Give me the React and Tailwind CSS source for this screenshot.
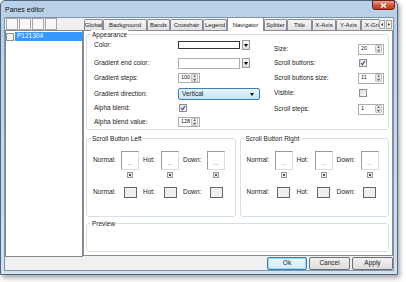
import React from "react";

const tabs = [
  ["Global", "w-[19px]"],
  ["Background", "w-[44px]"],
  ["Bands", "w-[23px]"],
  ["Crosshair", "w-[33px]"],
  ["Legend", "w-[24px]"],
  ["Navigator", "w-[37px]"],
  ["Splitter", "w-[23px]"],
  ["Title", "w-[25px]"],
  ["X-Axis", "w-[24px]"],
  ["Y-Axis", "w-[25px]"],
  ["X-Gri", "w-[18px]"],
];

function Down({ w = 4, h = 3, color = "#000" }) {
  return (
    <svg width={w} height={h} viewBox="0 0 4 3">
      <path d="M0 0H4L2 3Z" fill={color} />
    </svg>
  );
}

function SpinArrows() {
  return (
    <div className="flex flex-col w-[7px] h-[8px] mr-[1px] border border-[#c3c3c3] rounded-[1px] bg-gradient-to-b from-[#f8f8f8] to-[#e2e2e2]">
      <div className="flex-1 flex items-center justify-center border-b border-[#d0d0d0]">
        <svg width="3" height="2" viewBox="0 0 3 2"><path d="M0 2L1.5 0L3 2Z" fill="#666" /></svg>
      </div>
      <div className="flex-1 flex items-center justify-center">
        <svg width="3" height="2" viewBox="0 0 3 2"><path d="M0 0L1.5 2L3 0Z" fill="#666" /></svg>
      </div>
    </div>
  );
}

function Spin({ value, wide }) {
  return (
    <div className={`flex items-center justify-between border border-[#abadb3] bg-white ${wide ? "w-[26px] h-[11px]" : "w-[22px] h-[10px]"}`}>
      <span className="pl-[2px] text-[5.5px] leading-none">{value}</span>
      <SpinArrows />
    </div>
  );
}

function Check({ checked }) {
  return (
    <div className="ml-[1px] w-[8px] h-[8px] border border-[#8e8f8f] bg-gradient-to-br from-[#dcdcdc] to-[#fbfbfb] flex items-center justify-center">
      {checked && (
        <svg width="6" height="6" viewBox="0 0 6 6">
          <path d="M1 3.2L2.4 4.7L5 1.2" stroke="#4a5f97" strokeWidth="1.2" fill="none" />
        </svg>
      )}
    </div>
  );
}

function ColorCombo({ dark }) {
  return (
    <div className="flex items-center gap-[2px]">
      <div className={`w-[62px] bg-white ${dark ? "h-[8px] border border-[#333333]" : "h-[11px] border border-[#abadb3]"}`} />
      <div className="w-[8px] h-[10px] border border-[#9a9a9a] bg-gradient-to-b from-[#f6f6f6] to-[#dedede] flex items-center justify-center">
        <Down />
      </div>
    </div>
  );
}

function Row({ label, className = "", children }) {
  return (
    <div className={`flex items-center h-[12px] ${className}`}>
      <span className="w-[84px] shrink-0">{label}</span>
      {children}
    </div>
  );
}

function Group({ title, className = "", children }) {
  return (
    <div className={`relative border border-[#d5dfe5] rounded-[3px] ${className}`}>
      <span className="absolute left-[4px] -top-[5px] bg-white px-[1px] leading-[9px]">{title}</span>
      {children}
    </div>
  );
}

function PicBox() {
  return (
    <div className="flex flex-col items-center">
      <div className="w-[18px] h-[19px] bg-white border border-[#dddddd] border-t-[#9a9a9a] border-l-[#9a9a9a] flex items-end justify-center pb-[3px] text-[6px] text-[#555] leading-none">
        ...
      </div>
      <div className="mt-[2px] w-[6px] h-[6px] border border-[#9a9a9a] bg-[#e8e8e8] flex items-center justify-center">
        <div className="w-[2px] h-[2px] bg-[#555]" />
      </div>
    </div>
  );
}

function SmallBox() {
  return (
    <div className="w-[18px] flex justify-center">
      <div className="w-[13px] h-[11px] border border-[#666] bg-[#f0f0f0]" />
    </div>
  );
}

function ScrollGroup({ title }) {
  return (
    <Group title={title} className="flex-1 h-[79px]">
      <div className="flex items-start pl-[6px] pt-[12px]">
        <span className="w-[28px] h-[19px] flex items-center">Normal:</span>
        <PicBox />
        <span className="w-[22px] h-[19px] flex items-center pl-[4px]">Hot:</span>
        <PicBox />
        <span className="w-[28px] h-[19px] flex items-center pl-[4px]">Down:</span>
        <PicBox />
      </div>
      <div className="flex items-center pl-[6px] mt-[9px] h-[11px]">
        <span className="w-[28px]">Normal:</span>
        <SmallBox />
        <span className="w-[22px] pl-[4px]">Hot:</span>
        <SmallBox />
        <span className="w-[28px] pl-[4px]">Down:</span>
        <SmallBox />
      </div>
    </Group>
  );
}

function Btn({ children, focus }) {
  return (
    <button
      className={`h-full rounded-[2px] border flex items-center justify-center ${
        focus
          ? "w-[40px] border-[#3c7fb1] bg-gradient-to-b from-[#eaf6fd] to-[#d5ecf9] shadow-[inset_0_0_0_1px_#9fd3f2]"
          : "w-[41px] border-[#707070] bg-gradient-to-b from-[#f2f2f2] to-[#dcdcdc]"
      }`}
    >
      {children}
    </button>
  );
}

export default function App() {
  return (
    <div className="w-[406px] h-[282px] bg-white overflow-hidden text-[6.5px] leading-none text-[#1a1a1a] [font-family:'Liberation_Sans',Arial,sans-serif]">
      <div className="w-[398px] h-[275px] flex flex-col border border-[#51667e] rounded-t-[5px] bg-gradient-to-b from-[#b8d0e9] to-[#d2e1f1] shadow-[2px_3px_5px_rgba(0,0,0,0.35)]">
        {/* title bar */}
        <div className="h-[16px] flex items-start justify-between shrink-0">
          <span className="pl-[4px] pt-[5px] text-[7px] text-[#111]">Panes editor</span>
          <div className="-mt-[1px] mr-[2px] w-[23px] h-[10px] rounded-b-[3px] border border-[#6b2316] bg-gradient-to-b from-[#e6a595] via-[#d1573d] to-[#c2391f] flex items-center justify-center">
            <svg width="7" height="5" viewBox="0 0 7 5">
              <path d="M1 0.5L6 4.5M6 0.5L1 4.5" stroke="#fff" strokeWidth="1.4" />
            </svg>
          </div>
        </div>

        {/* client */}
        <div className="mx-[3px] mb-[3px] flex-1 flex flex-col border border-[#7f94ab] bg-[#f0f0f0]">
          <div className="h-[239px] flex">
            {/* left column */}
            <div className="w-[78px] flex flex-col">
              <div className="h-[12px] flex gap-[1px] pl-[1px]">
                <div className="w-[12px] h-[12px] border border-[#a7a7a7] bg-[#f7f7f7]" />
                <div className="w-[12px] h-[12px] border border-[#a7a7a7] bg-[#f7f7f7]" />
                <div className="w-[12px] h-[12px] border border-[#a7a7a7] bg-[#f7f7f7]" />
                <div className="w-[12px] h-[12px] border border-[#a7a7a7] bg-[#f7f7f7]" />
              </div>
              <div className="flex-1 bg-white border border-[#828790] pt-[1px]">
                <div className="flex items-center h-[9px]">
                  <div className="w-[8px] h-[8px] border border-[#8e8f8f] bg-[#f4f4f4]" />
                  <div className="flex-1 h-full ml-[1px] bg-[#3399ff] text-white flex items-center pl-[2px]">P121304</div>
                </div>
              </div>
            </div>

            {/* right column */}
            <div className="flex-1 flex flex-col">
              <div className="h-[12px] flex items-end pl-[1px] relative z-10 text-[6px]">
                {tabs.map(([name, w]) => {
                  const active = name === "Navigator";
                  return (
                    <div
                      key={name}
                      className={`${w} overflow-hidden whitespace-nowrap flex items-center ${
                        active
                          ? "h-[14px] -mb-[1px] bg-white border border-b-0 border-[#898c95] rounded-t-[2px] justify-center"
                          : name === "X-Gri"
                          ? "h-[11px] border border-r-0 border-b-0 border-[#898c95] bg-gradient-to-b from-[#f5f5f5] to-[#e1e1e1] pl-[3px]"
                          : "h-[11px] border border-b-0 border-[#898c95] rounded-t-[2px] bg-gradient-to-b from-[#f5f5f5] to-[#e1e1e1] justify-center"
                      }`}
                    >
                      {name}
                    </div>
                  );
                })}
                <div className="flex gap-[1px] mb-[1px]">
                  <div className="w-[6px] h-[9px] border border-[#a5a5a5] bg-[#f2f2f2] flex items-center justify-center">
                    <svg width="2" height="3" viewBox="0 0 2 3"><path d="M2 0V3L0 1.5Z" fill="#333" /></svg>
                  </div>
                  <div className="w-[6px] h-[9px] border border-[#a5a5a5] bg-[#f2f2f2] flex items-center justify-center">
                    <svg width="2" height="3" viewBox="0 0 2 3"><path d="M0 0V3L2 1.5Z" fill="#333" /></svg>
                  </div>
                </div>
              </div>

              <div className="h-[226px] bg-white border border-[#898c95] pt-[3px] pl-[2px] pr-[3px] flex flex-col">
                {/* Appearance */}
                <Group title="Appearance" className="h-[96px]">
                  <div className="flex items-start pl-[7px] pt-[4px]">
                    <div className="w-[166px] flex flex-col">
                      <Row label="Color:"><ColorCombo dark /></Row>
                      <Row label="Gradient end color:" className="mt-[6px]"><ColorCombo /></Row>
                      <Row label="Gradient steps:" className="mt-[3px]"><Spin value="100" /></Row>
                      <Row label="Gradient direction:" className="mt-[4px]">
                        <div className="w-[82px] h-[12px] rounded-[2px] border border-[#3c7fb1] bg-gradient-to-b from-[#e8f5fd] to-[#c2e4f7] flex items-center justify-between pl-[3px] pr-[5px]">
                          <span>Vertical</span>
                          <Down />
                        </div>
                      </Row>
                      <Row label="Alpha blend:" className="mt-[2px]"><Check checked /></Row>
                      <Row label="Alpha blend value:" className="mt-[2px]"><Spin value="128" /></Row>
                    </div>
                    <div className="w-[110px] ml-[14px] mt-[4px] flex flex-col">
                      <Row label="Size:"><Spin value="20" wide /></Row>
                      <Row label="Scroll buttons:" className="mt-[2px]"><Check checked /></Row>
                      <Row label="Scroll buttons size:" className="mt-[3px]"><Spin value="11" wide /></Row>
                      <Row label="Visible:" className="mt-[3px]"><Check /></Row>
                      <Row label="Scroll steps:" className="mt-[4px]"><Spin value="1" wide /></Row>
                    </div>
                  </div>
                </Group>

                <div className="mt-[8px] flex gap-[4px]">
                  <ScrollGroup title="Scroll Button Left" />
                  <ScrollGroup title="Scroll Button Right" />
                </div>

                <Group title="Preview" className="mt-[6px] h-[29px]" />
              </div>
            </div>
          </div>

          {/* bottom buttons */}
          <div className="flex-1 flex justify-end gap-[2px]">
            <Btn focus>Ok</Btn>
            <Btn>Cancel</Btn>
            <Btn>Apply</Btn>
          </div>
        </div>
      </div>
    </div>
  );
}
